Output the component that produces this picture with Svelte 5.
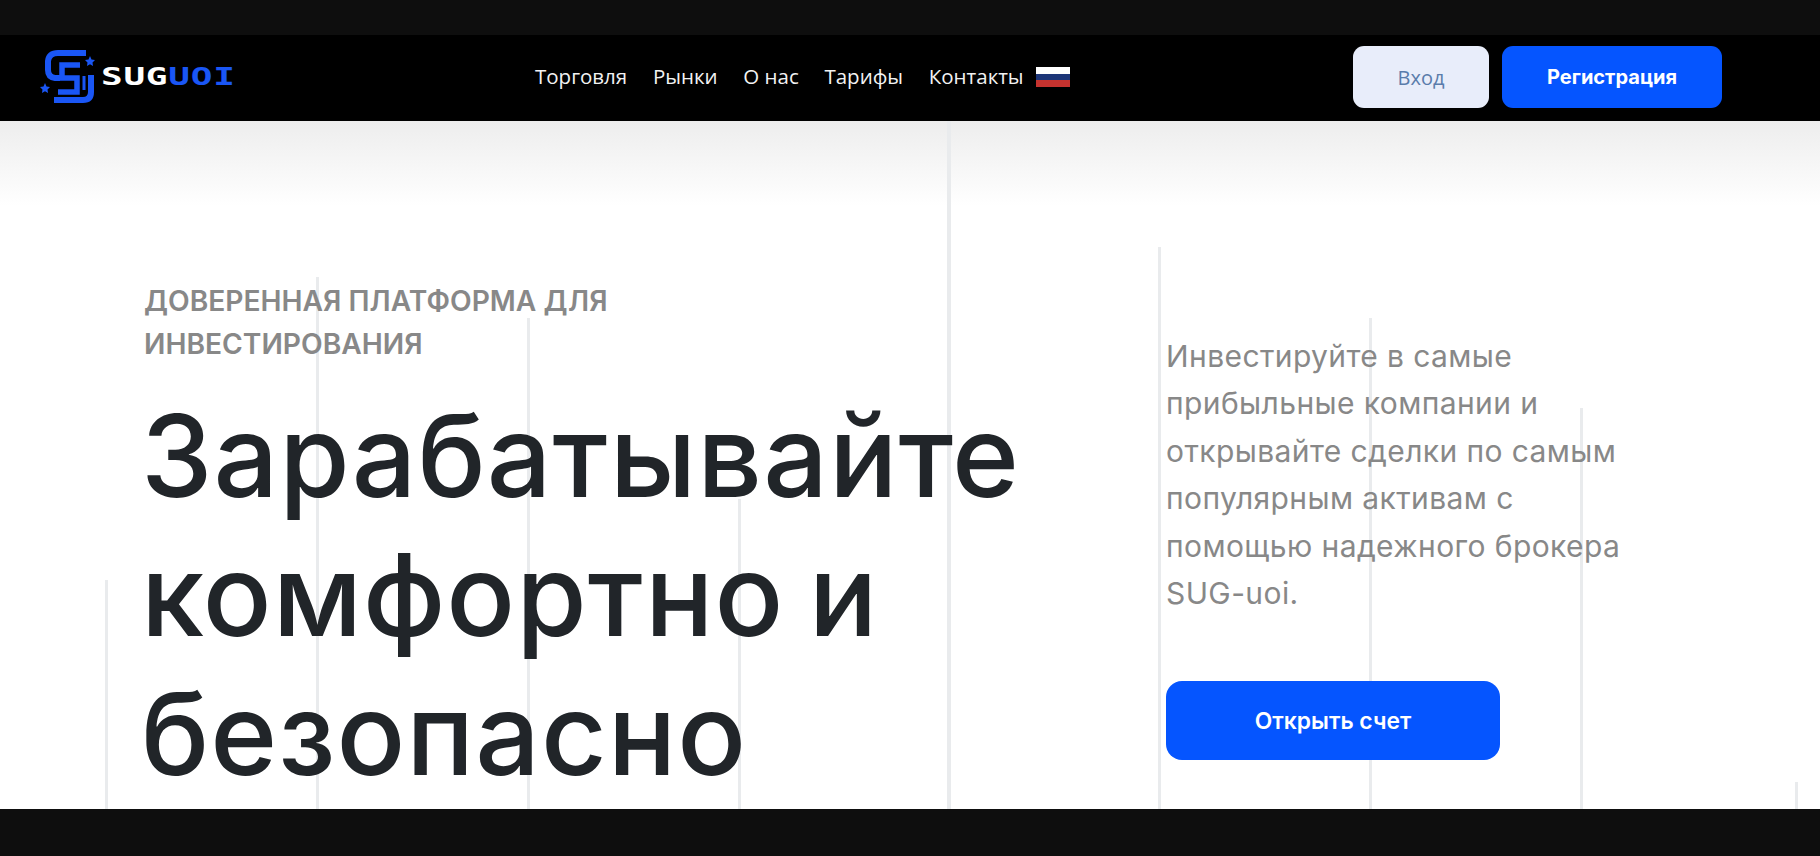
<script>
	const links = ['Торговля', 'Рынки', 'О нас', 'Тарифы', 'Контакты'];

	// decorative vertical lines behind the hero
	const rules = [
		{ x: 105, top: 459 },
		{ x: 316, top: 156 },
		{ x: 527, top: 197 },
		{ x: 738, top: 378 },
		{ x: 947, top: 0, wide: true },
		{ x: 1158, top: 126 },
		{ x: 1369, top: 197 },
		{ x: 1580, top: 287 },
		{ x: 1795, top: 661 }
	];
</script>

<div class="page">
	<div class="strip top"></div>

	<header>
		<a class="logo" href="#top">
			<svg width="60" height="60" viewBox="0 1 60 60" fill="none" stroke="#1a56f5" stroke-width="6">
				<path d="M46 7H18Q9 7 8 15V24Q8 31 15 32H20" />
				<path d="M40 19H22V32H37V46H18" stroke-width="5.500" />
				<path d="M44 30V44" stroke-width="3" />
				<path d="M51 29V46Q51 54 43 54H14" />
				<path d="M50 10l1.500 3.500 3.500.5-2.500 2.500.5 3.500-3-1.800-3 1.800.5-3.500-2.500-2.500 3.500-.5z" fill="#1a56f5" stroke="none" />
				<path d="M5 37l1.500 3.500 3.500.5-2.500 2.500.5 3.500-3-1.800-3 1.800.5-3.500-2.500-2.500 3.500-.5z" fill="#1a56f5" stroke="none" />
			</svg>
			<span class="wordmark">SUG<span class="blue">UOI</span></span>
		</a>

		<nav>
			{#each links as link}
				<a href="#top">{link}</a>
			{/each}
			<span class="flag"><i class="w"></i><i class="b"></i><i class="r"></i></span>
		</nav>

		<div class="actions">
			<a class="btn light" href="#top">Вход</a>
			<a class="btn primary" href="#top">Регистрация</a>
		</div>
	</header>

	<main>
		{#each rules as r}
			<span class="rule" class:wide={r.wide} style="left:{r.x}px;top:{r.top}px"></span>
		{/each}

		<section class="left">
			<p class="eyebrow">ДОВЕРЕННАЯ ПЛАТФОРМА ДЛЯ<br />ИНВЕСТИРОВАНИЯ</p>
			<h1>Зарабатывайте<br /><span class="tight">комфортно и</span><br />безопасно</h1>
		</section>

		<section class="right">
			<p class="lead">Инвестируйте в самые<br />прибыльные компании и<br />открывайте сделки по самым<br />популярным активам с<br />помощью надежного брокера<br />SUG-uoi.</p>
			<a class="btn primary open" href="#top">Открыть счет</a>
		</section>
	</main>

	<div class="strip bottom"></div>
</div>

<style>
	:global(body) {
		margin: 0;
		background: #0e0e0e;
		font-family: Inter, "Noto Sans", sans-serif;
	}

	a {
		text-decoration: none;
	}

	.page {
		height: 856px;
		display: flex;
		flex-direction: column;
		overflow: hidden;
	}

	.strip {
		background: #0e0e0e;
		flex: none;
	}

	.top {
		height: 35px;
	}

	.bottom {
		height: 47px;
	}

	header {
		height: 84px;
		flex: none;
		background: #000;
		display: flex;
		align-items: center;
		padding: 0 98px 2px 40px;
	}

	.logo {
		display: flex;
		align-items: center;
		width: 495px;
		flex: none;
	}

	.wordmark {
		font-family: "DejaVu Sans Mono", monospace;
		font-weight: 700;
		font-size: 24px;
		letter-spacing: 0.500px;
		color: #fff;
		margin-left: 1px;
		transform: scaleX(1.5);
		transform-origin: left center;
	}

	.blue {
		color: #1a56f5;
	}

	nav {
		display: flex;
		align-items: center;
		gap: 25.700px;
		font-family: "Open Sans", sans-serif;
		font-size: 20.500px;
		flex: 1;
		padding-bottom: 2px;
	}

	nav a {
		color: #f2f2f2;
	}

	.flag {
		display: flex;
		flex-direction: column;
		width: 34px;
		height: 20px;
		margin: 2px 0 0 -13.500px;
	}

	.flag i {
		flex: 1;
	}

	.w {
		background: #fff;
	}

	.b {
		background: #1c3578;
	}

	.r {
		background: #c5332f;
	}

	.actions {
		display: flex;
		gap: 13px;
	}

	.btn {
		display: flex;
		align-items: center;
		justify-content: center;
		border-radius: 11px;
		font-size: 20px;
	}

	.light {
		width: 136px;
		height: 62px;
		background: #e8edfa;
		color: #5a7cab;
		font-weight: 400;
		font-family: "Open Sans", sans-serif;
	}

	.primary {
		width: 220px;
		height: 62px;
		background: #0555ff;
		color: #fff;
		font-weight: 700;
	}

	main {
		flex: 1;
		position: relative;
		background: linear-gradient(#ededed, #fff 85px);
		display: flex;
		padding-left: 144px;
	}

	.rule {
		position: absolute;
		bottom: 0;
		width: 3px;
		background: #e9ebed;
	}

	.rule.wide {
		width: 4px;
	}

	section {
		position: relative;
	}

	.left {
		width: 1022px;
		flex: none;
		padding-top: 159px;
	}

	.eyebrow {
		margin: 0;
		font-size: 28.200px;
		line-height: 43px;
		font-weight: 600;
		color: #888;
	}

	h1 {
		margin: 20px 0 0 -3px;
		font-size: 114px;
		line-height: 139px;
		font-weight: 500;
		letter-spacing: 1px;
		color: #212529;
	}

	.tight {
		word-spacing: -7px;
	}

	.right {
		padding-top: 212px;
	}

	.lead {
		margin: 0;
		font-size: 30px;
		line-height: 47.400px;
		letter-spacing: 0.400px;
		color: #888;
	}

	.open {
		width: 334px;
		height: 79px;
		margin-top: 64px;
		border-radius: 16px;
		font-weight: 600;
		font-size: 22.800px;
	}
</style>
